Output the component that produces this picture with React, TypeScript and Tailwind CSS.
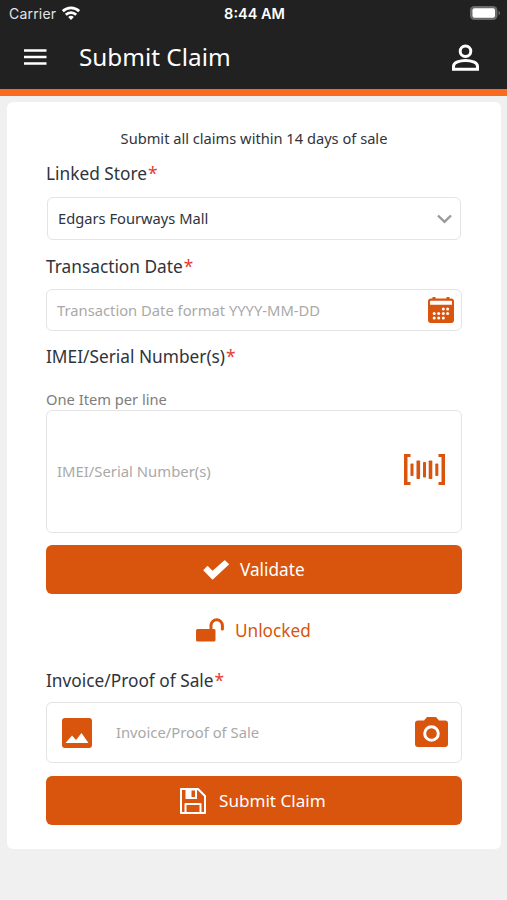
import type { ReactNode } from "react";

function StatusBar() {
  return (
    <div className="grid h-7 grid-cols-3 items-center pl-[9px] pr-[7px] font-['Inter',sans-serif] text-[14px] leading-none text-white">
      <div className="flex items-center gap-1.5 text-[#e4e4e4]">
        <span className="w-[47px] whitespace-nowrap tracking-[0.2px]">Carrier</span>
        <svg width="18" height="14" viewBox="0 0 18 14" fill="none" stroke="#fff" strokeWidth="2.7" className="-mt-0.5">
          <path d="M.8 5.200a11.800 11.800 0 0 1 16.400 0" />
          <path d="M3.800 8.700a7.400 7.400 0 0 1 10.400 0" />
          <path d="M9 14 6.200 11.100a4 4 0 0 1 5.600 0Z" fill="#fff" stroke="none" />
        </svg>
      </div>
      <div className="whitespace-nowrap pt-px text-center text-[14.500px] font-semibold">8:44 AM</div>
      <div className="flex justify-end">
        <svg width="30" height="15" viewBox="0 0 30 15" className="-mt-px">
          <rect width="27.500" height="14" rx="4.500" fill="#6b6b6b" />
          <rect x="2.500" y="2.300" width="22.500" height="9.400" rx="2" fill="#fff" />
          <path d="M28.500 4.800c2 .8 2 3.600 0 4.400Z" fill="#6b6b6b" />
        </svg>
      </div>
    </div>
  );
}

function Header() {
  return (
    <header className="h-24 border-b-[7px] border-[#f96b20] bg-[#212121]">
      <StatusBar />
      <div className="flex h-[59px] items-center pl-6 pr-7">
        <svg width="23" height="16" viewBox="0 0 23 16" stroke="#fff" strokeWidth="2.400" className="-mt-px">
          <path d="M0 1.500h22.500M0 8h22.500M0 14.500h22.500" />
        </svg>
        <h1 className="ml-8 flex-1 text-[24.300px] leading-none text-white">Submit Claim</h1>
        <svg width="27" height="28" viewBox="0 0 27 28" fill="none" stroke="#fff" strokeWidth="3">
          <circle cx="13.500" cy="7.200" r="5.300" />
          <path d="M1.500 25.300v-3.100c0-3.700 6.500-5.700 12-5.700s12 2 12 5.700v3.100Z" />
        </svg>
      </div>
    </header>
  );
}

function Label({ children, className }: { children: ReactNode; className: string }) {
  return (
    <div className={`h-6 whitespace-nowrap text-[17.300px] leading-6 text-[#2f343b] ${className}`}>
      {children}
      <span className="ml-px text-[#e53935]">*</span>
    </div>
  );
}

function CalendarIcon() {
  return (
    <svg width="26" height="27" viewBox="0 0 26 27" fill="#d9540d">
      <path d="M4.500 1.500V0h3v1.500h11V0h3v1.500H23a3 3 0 0 1 3 3V23a3 3 0 0 1-3 3H3a3 3 0 0 1-3-3V4.500a3 3 0 0 1 3-3Z" />
      <path d="M3 3.800h20a1 1 0 0 1 1 1v3H2v-3a1 1 0 0 1 1-1Z" fill="#fff" />
      <g fill="#fff">
        <circle cx="15.300" cy="12" r="1.500" />
        <circle cx="19.600" cy="12" r="1.500" />
        <circle cx="6.200" cy="16.500" r="1.500" />
        <circle cx="10.700" cy="16.500" r="1.500" />
        <circle cx="15.300" cy="16.500" r="1.500" />
        <circle cx="19.600" cy="16.500" r="1.500" />
        <circle cx="6.200" cy="21" r="1.500" />
        <circle cx="10.700" cy="21" r="1.500" />
        <circle cx="15.300" cy="21" r="1.500" />
      </g>
    </svg>
  );
}

function BarcodeIcon() {
  return (
    <svg width="41" height="31" viewBox="0 0 41 31" fill="#d9540d" className="-mt-1">
      <path d="M0 0h6.500v3H3.500v25h3v3H0ZM41 0h-6.500v3h3v25h-3v3H41Z" />
      <rect x="6.500" y="9.500" width="3" height="12.500" rx=".8" />
      <rect x="12.500" y="6.500" width="3.600" height="18.500" rx=".8" />
      <rect x="19" y="8" width="3" height="15.500" rx=".8" />
      <rect x="24.700" y="6.500" width="3.600" height="18.500" rx=".8" />
      <rect x="31.300" y="9.500" width="3" height="12.500" rx=".8" />
    </svg>
  );
}

export default function App() {
  return (
    <div className="min-h-[900px] w-full bg-[#f0f0f0] font-['Noto_Sans',sans-serif]">
      <Header />
      <main className="mx-[7px] mr-1.5 mt-1.5 rounded-md bg-white px-[39px] pb-6 pt-[26px]">
        <p className="h-5 whitespace-nowrap text-center text-[14.650px] leading-5 text-[#2f343b]">
          Submit all claims within 14 days of sale
        </p>

        <Label className="mt-3.5">Linked Store</Label>
        <div className="ml-px mr-px mt-[11px] flex h-[43px] items-center justify-between rounded-md border border-[#e2e4e6] pl-2.5 pr-2 text-[14.700px] text-[#2f343b]">
          Edgars Fourways Mall
          <svg width="15" height="10" viewBox="0 0 15 10" fill="none" stroke="#999" strokeWidth="2.400">
            <path d="m1 1.500 6.500 6.300L14 1.500" />
          </svg>
        </div>

        <Label className="mt-[15px]">Transaction Date</Label>
        <div className="mt-2.5 flex h-[42px] items-center justify-between rounded-md border border-[#e2e4e6] pl-2.5 pr-[7px] text-[14.750px] text-[#a9a9a9]">
          Transaction Date format YYYY-MM-DD
          <CalendarIcon />
        </div>

        <Label className="mt-3.5">IMEI/Serial Number(s)</Label>
        <p className="mt-5 h-[21px] text-[14.700px] leading-[21px] text-[#7d7d7d]">One Item per line</p>
        <div className="flex h-[123px] items-center justify-between rounded-md border border-[#e2e4e6] pl-2.5 pr-4 text-[14.850px] text-[#a9a9a9]">
          IMEI/Serial Number(s)
          <BarcodeIcon />
        </div>

        <button className="mt-3 flex h-[49px] w-full items-center rounded-md bg-[#d9540d] pl-[157px] text-[17.200px] text-white">
          <svg width="27" height="20" viewBox="0 0 27 20" fill="#fff" stroke="#fff" strokeWidth="1.500" strokeLinejoin="round">
            <path d="m1.200 10.200 3.300-3.300 5 4.900L21.700 1l3.500 3.300L9.600 18.800Z" />
          </svg>
          <span className="ml-2.5">Validate</span>
        </button>

        <div className="mt-[25px] flex h-6 items-center pl-[150px] text-[17.200px] text-[#d9540d]">
          <svg width="28" height="24" viewBox="0 0 28 24" className="-mt-0.5">
            <rect y="11" width="19.500" height="12.500" rx="1.500" fill="#d9540d" />
            <path d="M15 11.500V7.500a5.700 5.700 0 0 1 11.400 0V11" fill="none" stroke="#d9540d" strokeWidth="3" strokeLinecap="round" />
          </svg>
          <span className="ml-[11px]">Unlocked</span>
        </div>

        <Label className="mt-[26px]">Invoice/Proof of Sale</Label>
        <div className="mt-[9px] flex h-[61px] items-center rounded-md border border-[#e2e4e6] pl-[15px] pr-[13px] text-[14.750px] text-[#a9a9a9]">
          <svg width="30" height="30" viewBox="0 0 30 30">
            <rect width="30" height="30" rx="3" fill="#d9540d" />
            <path d="m3.500 25 6.500-7.500 4 4.500 5.500-7 7 10Z" fill="#fff" />
          </svg>
          <span className="ml-6 flex-1">Invoice/Proof of Sale</span>
          <svg width="33" height="30" viewBox="0 0 33 30" className="-mt-0.5">
            <path d="M3 3.500h6L12 0h9l3 3.500h6a3 3 0 0 1 3 3V27a3 3 0 0 1-3 3H3a3 3 0 0 1-3-3V6.500a3 3 0 0 1 3-3Z" fill="#d9540d" />
            <circle cx="16.500" cy="16.500" r="6.800" fill="none" stroke="#fff" strokeWidth="3" />
          </svg>
        </div>

        <button className="mt-[13px] flex h-[49px] w-full items-center rounded-md bg-[#d9540d] pl-[134px] text-[17.100px] text-white">
          <svg width="26" height="26" viewBox="0 0 26 26" fill="none" stroke="#fff" strokeWidth="2" strokeLinejoin="round">
            <path d="M1 1h17l7 7v17H1Z" />
            <path d="M5.500 1H17v10H5.500Z" fill="#fff" stroke="none" />
            <path d="M11.500 2.500H15v6.500h-3.500Z" fill="#d9540d" stroke="none" />
            <path d="M5.500 25v-9h15v9" />
          </svg>
          <span className="ml-[13px]">Submit Claim</span>
        </button>
      </main>
    </div>
  );
}
